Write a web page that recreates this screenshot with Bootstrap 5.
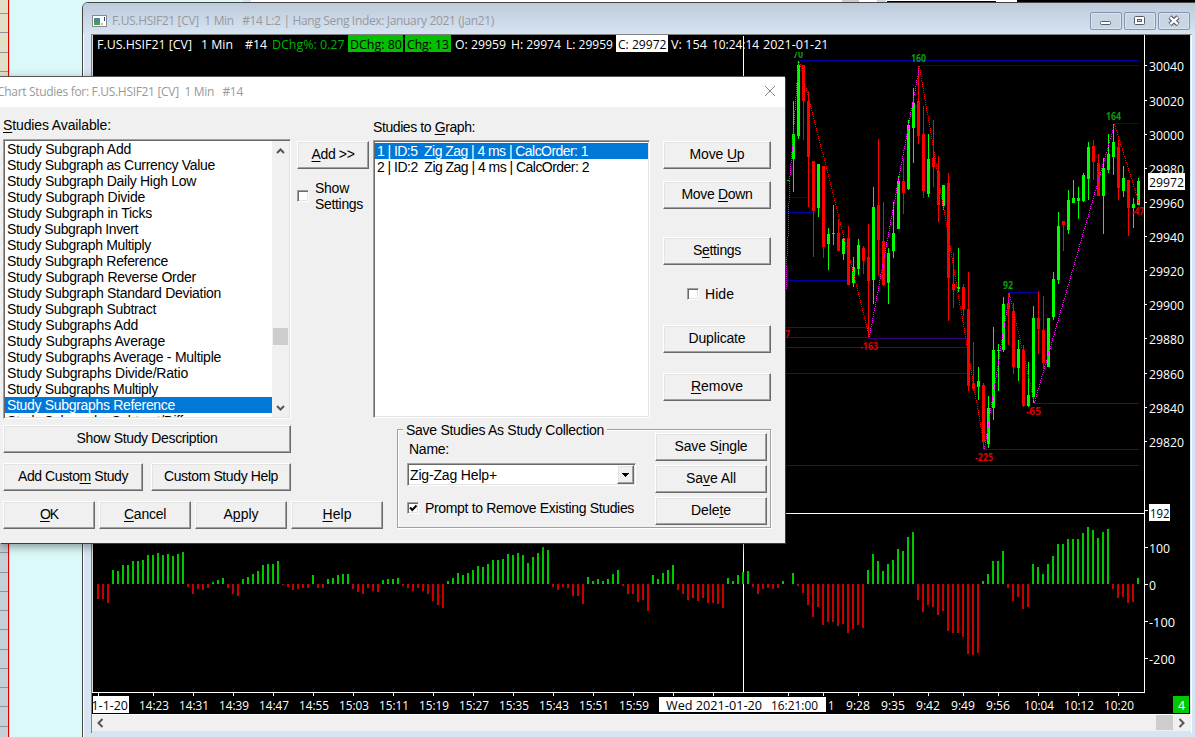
<!DOCTYPE html>
<html lang="en">
<head>
<meta charset="utf-8">
<title>Chart Studies</title>
<link href="https://cdn.jsdelivr.net/npm/bootstrap@5.3.0/dist/css/bootstrap.min.css" rel="stylesheet">
<style>
body{width:1195px;height:737px;overflow:hidden;background:#dcf9f9;font-family:"Liberation Sans",Arial,sans-serif;font-size:14px;line-height:16px;color:#000}
.chart-win{left:82px;top:2px;width:1130px;height:760px;background:#d7e4f2;border:1px solid #444;border-radius:6px 0 0 0;box-shadow:inset 1px 1px 0 #fff}
.chart-title{height:31px;width:1112px;padding:8px 0 0 9px;background:linear-gradient(#bccada,#d7e4f2);border-radius:5px 0 0 0;font:12px/20px "Open Sans","Noto Sans",sans-serif;color:#98999d;white-space:pre}
.cap-btns{gap:2px;margin:1px 5px 0 0}
.cap-btn{width:32px;height:18px;border:1px solid #8593ac;border-radius:2px;box-shadow:inset 0 0 0 1px #d9e3ee;background:#c8d5e3}
.chart-frame{margin-left:8px;width:1101px;height:699px;border:1px solid #808080;border-width:1px 1px 0 1px;border-right-color:#fff}
.hbar{height:18px;background:#f0f0f0;border-top:1px solid #fff;border-bottom:1px solid #e3e3e3}
.dlg{left:0;top:77px;width:785px;height:466px;background:#f0f0f0;box-shadow:1px 1px 0 #3c3c3c,0 -1px 0 #555,0 3px 10px rgba(0,0,0,.45)}
.dlg-title{height:30px;background:#fff;font:12px/30px "Open Sans","Noto Sans",sans-serif;color:#999;white-space:pre}
.dlg-title span{margin-left:-3px}
.dlg-title svg{margin:0 9px 2px 0}
.wbtn{height:28px;padding:0 0 2px;border:1px solid;border-color:#fff #696969 #696969 #fff;box-shadow:inset -1px -1px 0 #a0a0a0,inset 1px 1px 0 #e3e3e3;border-radius:0;background:#f0f0f0;font-size:14px;line-height:16px;color:#000;display:flex;align-items:center;justify-content:center;white-space:nowrap}
.sunk{background:#fff;border:1px solid;border-color:#a0a0a0 #fff #fff #a0a0a0;box-shadow:inset 1px 1px 0 #696969,inset -1px -1px 0 #e3e3e3}
.lbl{height:18px;line-height:18px;white-space:nowrap}
.rowi{height:16px;line-height:16px;padding-left:2px;white-space:pre}
.rowi.on{background:#0078d7;color:#fff}
.vbar{width:17px;background:#f0f0f0}
.chk{width:12px;height:12px;flex:none}
.grp{width:374px;height:99px;border:1px solid #a0a0a0;box-shadow:inset 1px 1px 0 #fff,1px 1px 0 #fff;margin:10px 0 0 14px}
.grp-cap{left:5px;top:-9px;height:18px;line-height:18px;padding:0 3px;background:#f0f0f0;white-space:nowrap}
u{text-underline-offset:2px;text-decoration-thickness:1px}
svg text{white-space:pre}
</style>
</head>
<body class="position-relative m-0">
<svg class="position-absolute top-0 start-0" width="1195" height="737" shape-rendering="crispEdges">
<rect width="8" height="543" fill="#e1dfc6"/><rect y="543" width="8" height="194" fill="#c3d0d8"/>
<g id="rails" fill="#8e9599"></g>
<rect x="8" width="1" height="737" fill="#e00000"/><rect x="9" width="1" height="737" fill="#c9dede"/>
<rect x="243" width="8" height="2" fill="#d7e4f2"/><rect x="251" width="626" height="2" fill="#fff"/>
<rect x="842" width="17" height="2" fill="#cdcdcd"/><rect x="877" width="10" height="2" fill="#c8d8e8"/><rect x="886" width="110" height="2" fill="#fff"/><rect x="887" y="1" width="109" height="1" fill="#000"/><rect x="996" width="21" height="2" fill="#fff"/><rect x="1017" width="178" height="2" fill="#000"/>
</svg>

<div class="chart-win position-absolute">
  <div class="chart-title d-flex justify-content-between">
    <div class="d-flex">
      <svg width="16" height="14" class="mt-1 me-1" shape-rendering="crispEdges"><rect x=".5" y=".5" width="14" height="11" fill="#fff" stroke="#8a8a8a"/><rect x="2" y="3" width="6" height="7" fill="#47889b"/><rect x="2" y="7" width="6" height="3" fill="#4f9a5c"/><rect x="9" y="8" width="2" height="2" fill="#bbb"/><rect x="12" y="2" width="1" height="4" fill="#23409a"/></svg>
      <span data-w="382">F.US.HSIF21 [CV]  1 Min   #14 L:2 | Hang Seng Index: January 2021 (Jan21)</span>
    </div>
    <div class="cap-btns d-flex">
      <div class="cap-btn"><svg width="30" height="16" class="d-block"><rect x="9.5" y="8.5" width="10" height="3" rx="1" fill="#fff" stroke="#555c6c"/></svg></div>
      <div class="cap-btn"><svg width="30" height="16" class="d-block"><rect x="9.5" y="3.500" width="10" height="8" rx="1" fill="#fff" stroke="#555c6c"/><rect x="12.500" y="6.500" width="4" height="2" fill="#c8d5e3" stroke="#555c6c"/></svg></div>
      <div class="cap-btn"><svg width="30" height="16" class="d-block"><path d="M11 4L19 11.500M19 4L11 11.500" stroke="#555c6c" stroke-width="4.600"/><path d="M11.300 4.300L18.700 11.200M18.700 4.300L11.300 11.200" stroke="#fff" stroke-width="2.400"/></svg></div>
    </div>
  </div>
  <div class="chart-frame">
    <svg id="plot" class="d-block" width="1098" height="679" viewBox="92 35 1098 679" style="background:#000" font-family="'Open Sans','Noto Sans',sans-serif" font-size="12.500" fill="#fff"></svg>
    <div class="hbar d-flex align-items-stretch justify-content-between">
      <svg width="17" height="16"><path d="M10.500 4L6.500 8l4 4" fill="none" stroke="#555" stroke-width="2"/></svg>
      <svg width="35" height="16"><rect width="17" height="15" fill="#cdcdcd"/><path d="M23.500 4l4 4-4 4" fill="none" stroke="#555" stroke-width="2"/></svg>
    </div>
  </div>
</div>

<div class="dlg position-absolute">
  <div class="dlg-title d-flex justify-content-between align-items-center">
    <span data-w="246">Chart Studies for: F.US.HSIF21 [CV]  1 Min   #14</span>
    <svg width="12" height="12"><path d="M1 1l10 10M11 1L1 11" stroke="#888"/></svg>
  </div>
  <div class="d-flex" style="height:312px">
    <div style="width:288px;margin-left:3px;padding-top:9px">
      <div class="lbl" style="margin-bottom:5px"><span data-w="108"><u>S</u>tudies Available:</span></div>
      <div class="sunk d-flex" style="height:280px;padding:1px">
        <div class="flex-grow-1 overflow-hidden" id="avail" style="height:276px"></div>
        <svg class="vbar" width="17" height="276"><path d="M5 12l3.500-3.500L12 12" fill="none" stroke="#555" stroke-width="2"/><rect x="1" y="187" width="15" height="17" fill="#cdcdcd"/><path d="M5 265l3.500 3.500L12 265" fill="none" stroke="#555" stroke-width="2"/></svg>
      </div>
    </div>
    <div style="width:72px;margin-left:6px;padding-top:34px">
      <button class="btn wbtn w-100"><span data-w="43"><u>A</u>dd &gt;&gt;</span></button>
      <div class="d-flex align-items-center" style="margin-top:11px;gap:6px"><div class="chk sunk"></div><div><span data-w="34">Show</span><br><span data-w="48">Settings</span></div></div>
    </div>
    <div style="width:277px;margin-left:4px;padding-top:11px">
      <div class="lbl" style="margin-bottom:4px"><span data-w="102">Studies to <u>G</u>raph:</span></div>
      <div class="sunk" style="height:278px;padding:1px">
        <div class="rowi on" style="margin-top:1px"><span data-w="211">1 | ID:5  Zig Zag | 4 ms | CalcOrder: 1</span></div>
        <div class="rowi"><span data-w="212">2 | ID:2  Zig Zag | 4 ms | CalcOrder: 2</span></div>
      </div>
    </div>
    <div style="width:108px;margin-left:13px;padding-top:34px">
      <button class="btn wbtn w-100"><span data-w="55">Move <u>U</u>p</span></button>
      <button class="btn wbtn w-100" style="margin-top:12px"><span data-w="71">Move <u>D</u>own</span></button>
      <button class="btn wbtn w-100" style="margin-top:28px"><span data-w="48">S<u>e</u>ttings</span></button>
      <div class="d-flex align-items-center" style="margin:21px 0 23px 24px;gap:6px"><div class="chk sunk"></div><span data-w="29">Hide</span></div>
      <button class="btn wbtn w-100"><span data-w="57">Duplicate</span></button>
      <button class="btn wbtn w-100" style="margin-top:20px"><span data-w="52"><u>R</u>emove</span></button>
    </div>
  </div>
  <div class="d-flex">
    <div style="width:380px;margin-left:3px;padding-top:6px">
      <button class="btn wbtn" style="width:288px"><span data-w="141">Show Study Description</span></button>
      <div class="d-flex" style="gap:8px;margin:10px 0"><button class="btn wbtn" style="width:140px"><span data-w="110">Add Custo<u>m</u> Study</span></button><button class="btn wbtn" style="width:140px"><span data-w="114">Custom Study Help</span></button></div>
      <div class="d-flex" style="gap:4px"><button class="btn wbtn" style="width:92px"><span data-w="18"><u>O</u>K</span></button><button class="btn wbtn" style="width:92px"><span data-w="42"><u>C</u>ancel</span></button><button class="btn wbtn" style="width:92px"><span data-w="35">A<u>p</u>ply</span></button><button class="btn wbtn" style="width:92px"><span data-w="29"><u>H</u>elp</span></button></div>
    </div>
    <div class="grp position-relative d-flex">
      <div class="grp-cap position-absolute"><span data-w="198">Save Studies As Study Collection</span></div>
      <div style="width:230px;margin-left:9px;padding-top:10px">
        <div class="lbl" style="margin:0 0 5px 2px"><span data-w="40">Name:</span></div>
        <div class="sunk d-flex align-items-center justify-content-between" style="height:23px;padding:1px;width:229px"><span data-w="87" style="margin-left:1px">Zig-Zag Help+</span><div class="wbtn" style="width:17px;height:19px;padding:0"><svg width="7" height="4" shape-rendering="crispEdges"><path d="M0 0h7L3.500 4z"/></svg></div></div>
        <div class="d-flex align-items-center" style="margin-top:14px;gap:6px"><div class="chk sunk"><svg width="10" height="10" class="d-block"><path d="M2 4.500L4.300 7L8.500 2.500" fill="none" stroke="#000" stroke-width="2"/></svg></div><span data-w="209" class="text-nowrap">Prompt to Remove Existing Studies</span></div>
      </div>
      <div style="width:112px;margin-left:18px;padding-top:3px">
        <button class="btn wbtn w-100"><span data-w="73">Save S<u>i</u>ngle</span></button>
        <button class="btn wbtn w-100" style="margin-top:4px"><span data-w="50">Sa<u>v</u>e All</span></button>
        <button class="btn wbtn w-100" style="margin-top:4px"><span data-w="40">Dele<u>t</u>e</span></button>
      </div>
    </div>
  </div>
</div>
<script src="https://cdn.jsdelivr.net/npm/bootstrap@5.3.0/dist/js/bootstrap.bundle.min.js"></script>
<script>
// list of studies: [name suffix, rendered width]
const studies=[["Subgraph Add",124],["Subgraph as Currency Value",208],["Subgraph Daily High Low",189],["Subgraph Divide",138],["Subgraph in Ticks",145],["Subgraph Invert",131],["Subgraph Multiply",144],["Subgraph Reference",161],["Subgraph Reverse Order",189],["Subgraph Standard Deviation",214],["Subgraph Subtract",149],["Subgraphs Add",131],["Subgraphs Average",158],["Subgraphs Average - Multiple",214],["Subgraphs Divide/Ratio",181],["Subgraphs Multiply",151],["Subgraphs Reference",168],["Subgraphs Subtract/Difference",216]];
document.getElementById('avail').innerHTML=studies.map((s,i)=>`<div class="rowi${i===16?' on':''}"><span data-w="${s[1]}">Study ${s[0]}</span></div>`).join('');

// grid lines of the sheet at the far left
let rl='';for(let y=13;y<737;y+=19.26)rl+=`<rect x="0" y="${Math.round(y)}" width="8" height="1"/>`;
document.getElementById('rails').innerHTML=rl;

// difference histogram, pixels from the zero line
const hist=[-15,-15,-19,14,13,19,19,23,23,24,29,29,31,29,30,28,30,32,-3,-10,-5,-6,-4,2,4,6,-4,-10,-12,5,7,10,13,19,20,20,23,-1,-3,-6,-5,-4,-4,9,-4,-4,5,6,9,10,10,-5,-8,-10,-4,-7,-8,4,5,5,6,-2,-4,-7,-4,-7,-10,-17,-21,-24,3,6,11,9,11,14,18,17,20,24,24,25,30,29,31,29,21,27,31,37,34,-3,-6,-3,-4,-12,-12,-20,7,3,5,3,5,10,14,-2,-10,-10,-18,-16,-27,9,5,11,14,19,-6,-10,-16,-14,-17,-14,-19,-19,-20,-24,6,3,9,12,13,-3,-10,-5,-4,-5,-4,3,0,11,-2,-9,-21,-33,-23,-41,-38,-38,-42,-40,-49,-45,-41,-44,14,30,23,13,20,24,35,33,47,52,-16,-28,-21,-23,-31,-27,-47,-49,-49,-53,-70,-71,-69,3,10,23,23,33,-4,-17,-13,-25,-23,20,17,10,20,28,40,40,45,45,45,51,57,54,46,52,55,-5,-14,-13,-19,-18,6];
// candles: high, body top, body bottom, low, up(1)/down(0)
const can=[[101,134,159,192,1],[61,65,136,139,1],[65,65,101,140,0],[91,101,157,207,0],[161,161,211,257,0],[164,164,208,217,1],[166,166,247,258,0],[228,234,244,270,1],[205,233,234,245,1],[219,233,251,251,0],[238,239,254,260,1],[226,238,285,285,0],[257,267,283,287,1],[239,245,269,275,1],[246,248,261,274,0],[224,257,281,337,0],[187,207,280,304,1],[139,205,240,275,0],[202,241,285,286,0],[248,253,283,304,1],[202,233,251,258,1],[176,181,229,229,1],[159,181,193,214,0],[120,125,189,190,1],[88,103,128,163,1],[66,101,136,144,0],[106,134,191,198,0],[134,159,194,197,1],[120,158,167,187,0],[156,171,205,222,0],[185,185,206,210,1],[173,183,278,321,0],[253,284,290,308,0],[248,287,289,292,1],[284,287,309,316,0],[272,309,386,391,0],[342,383,389,391,0],[367,381,387,400,1],[383,385,442,449,0],[396,408,444,448,1],[327,350,408,420,1],[344,350,351,391,1],[297,304,350,352,1],[293,303,309,345,0],[303,311,367,374,0],[340,349,368,381,1],[345,350,406,407,0],[362,395,406,407,1],[306,318,397,403,1],[291,318,329,354,0],[296,330,363,369,0],[318,318,367,367,1],[272,279,317,320,1],[212,226,280,284,1],[221,221,225,251,0],[190,200,230,234,1],[180,198,203,203,1],[187,198,201,219,1],[173,175,201,202,1],[142,147,179,200,1],[140,146,162,180,0],[154,163,196,196,0],[158,168,196,234,1],[134,154,170,173,1],[124,142,157,175,1],[140,147,188,200,0],[166,178,191,197,1],[180,180,208,236,0],[198,204,208,228,1],[178,181,205,205,1]];
const R=(x,y,w,h,f)=>`<rect x="${x}" y="${y}" width="${w}" height="${h}" fill="${f}"/>`;
const T=(x,y,w,t,f='#fff',e='')=>`<text x="${x}" y="${y}" textLength="${w}" lengthAdjust="spacingAndGlyphs" fill="${f}" ${e}>${t}</text>`;
let g='';
const lines=[[799,60,340],[919,65,220],[1114,123,25],[785,173,9],[785,197,24],[785,212,29],[785,280,64],[1008,292,31]];
const lows=[[785,327,84],[785,337,84],[868,338,101],[785,347,184],[785,373,184],[983,449,156],[785,465,354],[1034,403,105]];
lines.forEach(l=>g+=R(l[0],l[1],l[2],1,'#0000a8'));lows.forEach(l=>g+=R(l[0],l[1],l[2],1,'#3c0078'));
can.forEach((c,k)=>{const x=793+5*k,f=c[4]?'#0f0':'#f00';g+=R(x,c[0],1,c[3]-c[0],f)+R(x-1,c[1],3,c[2]-c[1],f)});
g+=R(787,180,3,1,'#0f0');
const B='font-weight="700" font-size="10" font-family="\'Noto Sans\',\'DejaVu Sans\',sans-serif"';
[["70",793,58,10,1],["160",911,62,15,1],["164",1106,120,15,1],["92",1003,289,10,1],["-163",860,350,18,0],["7",785,338,5,0],["-65",1026,415,15,0],["-225",975,461,18,0],["-47",1132,215,12,0]].forEach(l=>g+=T(l[1],l[2],l[3],l[0],l[4]?'#0a9c0a':'#dc0000',B));
// dotted zig-zag legs
const legs=[[[785,312],[786,265],[788,225],[789,180],[792,145],[798,62],'#f0f'],[[799,62],[869,336],'#f00'],[[869,336],[919,66],'#f0f'],[[919,66],[984,448],'#f00'],[[984,448],[1009,293],'#f0f'],[[1009,293],[1034,402],'#f00'],[[1034,402],[1114,124],'#f0f'],[[1114,124],[1139,204],'#f00']];
legs.forEach(l=>{let d='';for(let i=0;i<l.length-2;i++){const[a,b]=l[i],[c,e]=l[i+1],s=Math.sign(e-b);for(let y=b;(e-y)*s>0;y+=2*s)d+=`M${Math.round(a+(c-a)*(y-b)/(e-b))} ${y}h1v1h-1z`}g+=`<path d="${d}" fill="${l[l.length-1]}"/>`});
// histogram
hist.forEach((v,i)=>{if(v)g+=R(97+5*i,v>0?584-v:584,2,Math.abs(v),v>0?'#00c800':'#c80000')});
// crosshair, axes, ticks
g+=R(92,35,1050,17,'#000')+R(743,36,1,656,'#fff')+R(92,513,1052,1,'#fff')+R(1144,35,1,658,'#fff')+R(92,692,1053,1,'#fff')+R(743,572,1,12,'#c040c0');
[65,100,134,168,202,236,270,304,338,373,407,441].forEach((y,i)=>g+=R(1145,y,2,1,'#fff')+T(1149,y+6,35,String(30040-20*i)));
[[510,''],[547,'100',21],[584,'0',7],[621,'-100',26],[658,'-200',26]].forEach(a=>{g+=R(1145,a[0],3,1,'#fff');if(a[1])g+=T(1149,a[0]+6,a[2],a[1])});
g+=R(1148,173,37,17,'#fff')+T(1149,187,35,'29972','#000')+R(1149,504,21,17,'#fff')+T(1150,518,19.5,'192','#000');
[98,153,193,233,273,313,353,393,433,473,513,553,593,633,673,713,788,823,858,893,928,963,998,1038,1078,1118].forEach(x=>g+=R(x,693,1,3,'#fff'));
["14:23","14:31","14:39","14:47","14:55","15:03","15:11","15:19","15:27","15:35","15:43","15:51","15:59"].forEach((t,i)=>g+=T(139+40*i,710,30,t));
["9:28","9:35","9:42","9:49","9:56"].forEach((t,i)=>g+=T(846+35*i,710,24,t));
["10:04","10:12","10:20"].forEach((t,i)=>g+=T(1024+40*i,710,30,t));
g+=T(828,710,6.5,'1')+R(93,696,36,17,'#fff')+T(91.5,710,36.5,'1-1-20','#000')+R(659,697,167,15,'#fff')+T(666,710,96,'Wed 2021-01-20','#000')+T(771,710,47,'16:21:00','#000')+R(1173,696,16,17,'#00c800')+T(1178,710,7,'4');
// header line
g+=R(348,35,55,17,'#00c000')+R(405,35,46,17,'#00c000')+R(616,35,52,17,'#fff');
[["F.US.HSIF21 [CV]",97,95],["1 Min",201,32],["#14",245,22],["DChg%: 0.27",272,72.5,'#00b400'],["DChg: 80",350,52,'#000'],["Chg: 13",407,42,'#000'],["O: 29959",455,51],["H: 29974",511,50],["L: 29959",566,47],["C: 29972",618,48.500,'#000'],["V: 154",671,36],["10:24:14",712,47],["2021-01-21",763,65.500]].forEach(h=>g+=T(h[1],49,h[2],h[0],h[3]||'#fff'));
g+=R(92,35,1,657,'#d8d8d8');
document.getElementById('plot').innerHTML='<g shape-rendering="crispEdges">'+g+'</g>';

// tune letter spacing of each caption to its design width
document.querySelectorAll('[data-w]').forEach(e=>{const r=document.createRange();r.selectNodeContents(e);e.style.letterSpacing=((+e.dataset.w-r.getBoundingClientRect().width)/e.textContent.length).toFixed(3)+'px'});
</script>
</body>
</html>
